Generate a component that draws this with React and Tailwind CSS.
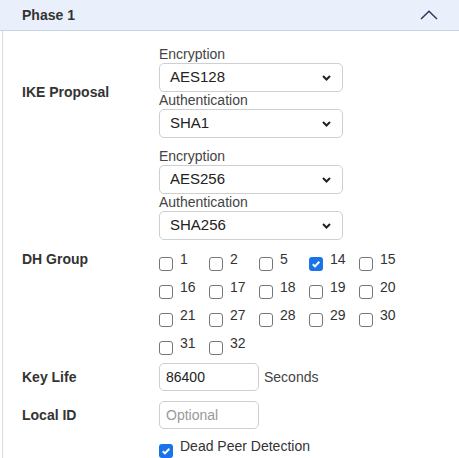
import React from "react";

const font = { fontFamily: '"Liberation Sans", Arial, sans-serif' };

function Chevron() {
  return (
    <svg width="9" height="6" viewBox="0 0 9 6" className="pointer-events-none absolute right-[12px] top-1/2 -translate-y-1/2">
      <path d="M1 1l3.5 3.5L8 1" fill="none" stroke="#222" strokeWidth="2" />
    </svg>
  );
}

function Select({ value }) {
  return (
    <div className="relative w-[184px]">
      <select
        defaultValue={value}
        className="block h-[29px] w-full appearance-none rounded-[5px] border border-[#cfcfcf] bg-white pl-[10px] text-[15px] text-[#222] outline-none"
      >
        <option>{value}</option>
      </select>
      <Chevron />
    </div>
  );
}

function Box({ checked }) {
  return checked ? (
    <span className="mt-[6px] flex h-[14px] w-[14px] shrink-0 items-center justify-center rounded-[3px] bg-[#1a73e8]">
      <svg width="10" height="10" viewBox="0 0 10 10">
        <path d="M1.8 5.2l2.2 2.2L8.3 2.8" fill="none" stroke="#fff" strokeWidth="2" />
      </svg>
    </span>
  ) : (
    <span className="mt-[6px] h-[14px] w-[14px] shrink-0 rounded-[3px] border border-[#767676] bg-white" />
  );
}

function Check({ label, checked }) {
  return (
    <div className="flex h-[20px] w-[50px] items-start gap-[7px]">
      <Box checked={checked} />
      <span className="text-[14px] leading-[17px] text-[#333]">{label}</span>
    </div>
  );
}

function Label({ children }) {
  return (
    <div className="w-[156px] shrink-0 pl-[19px] text-[14px] font-bold text-[#333]">{children}</div>
  );
}

function Group({ enc, auth }) {
  return (
    <div className="flex flex-col">
      <div className="text-[14px] leading-[17px] text-[#444]">Encryption</div>
      <Select value={enc} />
      <div className="text-[14px] leading-[17px] text-[#444]">Authentication</div>
      <Select value={auth} />
    </div>
  );
}

export default function App() {
  const dh = [
    ["1", false], ["2", false], ["5", false], ["14", true], ["15", false],
    ["16", false], ["17", false], ["18", false], ["19", false], ["20", false],
    ["21", false], ["27", false], ["28", false], ["29", false], ["30", false],
    ["31", false], ["32", false],
  ];
  return (
    <div className="h-[458px] w-[459px] overflow-hidden bg-white" style={font}>
      <div className="flex h-[31px] items-center justify-between border-b border-[#c9d3e3] bg-[#e9f0fb] pl-[22px] pr-[21px]">
        <span className="text-[14px] font-bold text-[#333]">Phase 1</span>
        <svg width="18" height="10" viewBox="0 0 18 10">
          <path d="M1 9L9 1.2 17 9" fill="none" stroke="#2b3a55" strokeWidth="1.5" />
        </svg>
      </div>
      <div className="ml-[2px] flex flex-col border-l border-[#dcdcdc] pt-[15px]">
        <div className="flex items-center">
          <Label>IKE Proposal</Label>
          <Group enc="AES128" auth="SHA1" />
        </div>
        <div className="mt-[10px] flex">
          <div className="w-[156px] shrink-0" />
          <Group enc="AES256" auth="SHA256" />
        </div>
        <div className="mt-[11px] flex items-start">
          <div className="w-[156px] shrink-0 pl-[19px] text-[14px] font-bold leading-[17px] text-[#333]">DH Group</div>
          <div className="grid w-[250px] grid-cols-5 gap-y-[8px]">
            {dh.map(([l, c]) => (
              <Check key={l} label={l} checked={c} />
            ))}
          </div>
        </div>
        <div className="mt-[8px] flex items-center">
          <Label>Key Life</Label>
          <input
            defaultValue="86400"
            className="h-[28px] w-[100px] rounded-[5px] border border-[#cfcfcf] px-[6px] text-[14px] text-[#222] outline-none"
          />
          <span className="ml-[5px] text-[14px] text-[#444]">Seconds</span>
        </div>
        <div className="mt-[10px] flex items-center">
          <Label>Local ID</Label>
          <input
            placeholder="Optional"
            className="h-[28px] w-[100px] rounded-[5px] border border-[#cfcfcf] px-[6px] text-[14px] text-[#222] outline-none placeholder:text-[#999]"
          />
        </div>
        <div className="mt-[9px] flex items-start pb-[20px]">
          <div className="w-[156px] shrink-0" />
          <div className="flex items-start gap-[7px]">
            <Box checked />
            <span className="text-[14px] leading-[17px] text-[#333]">Dead Peer Detection</span>
          </div>
        </div>
      </div>
    </div>
  );
}
